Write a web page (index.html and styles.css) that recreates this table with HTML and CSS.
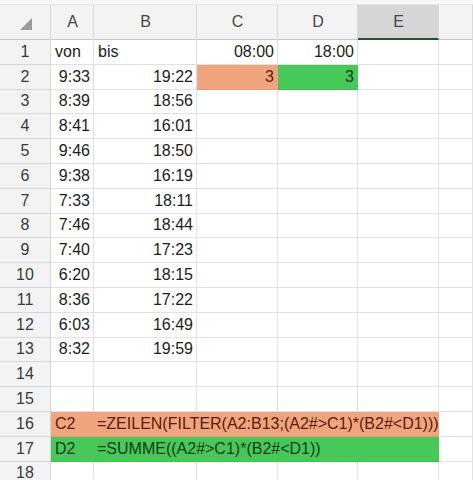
FILE: index.html
```html
<!DOCTYPE html>
<html lang="de">
<head>
<meta charset="utf-8">
<title>Tabelle</title>
<link rel="stylesheet" href="styles.css">
</head>
<body>
<div class="sheet">
  <div class="strip"></div>
  <div class="row head">
    <div class="c rh corner"><span class="tri"></span></div>
    <div class="c ch">A</div>
    <div class="c ch">B</div>
    <div class="c ch">C</div>
    <div class="c ch">D</div>
    <div class="c ch sel">E</div>
    <div class="c ch"></div>
  </div>
  <div class="row"><div class="c rh">1</div><div class="c">von</div><div class="c">bis</div><div class="c r">08:00</div><div class="c r">18:00</div><div class="c"></div><div class="c"></div></div>
  <div class="row"><div class="c rh">2</div><div class="c r">9:33</div><div class="c r">19:22</div><div class="c r or">3</div><div class="c r gr">3</div><div class="c"></div><div class="c"></div></div>
  <div class="row"><div class="c rh">3</div><div class="c r">8:39</div><div class="c r">18:56</div><div class="c"></div><div class="c"></div><div class="c"></div><div class="c"></div></div>
  <div class="row"><div class="c rh">4</div><div class="c r">8:41</div><div class="c r">16:01</div><div class="c"></div><div class="c"></div><div class="c"></div><div class="c"></div></div>
  <div class="row"><div class="c rh">5</div><div class="c r">9:46</div><div class="c r">18:50</div><div class="c"></div><div class="c"></div><div class="c"></div><div class="c"></div></div>
  <div class="row"><div class="c rh">6</div><div class="c r">9:38</div><div class="c r">16:19</div><div class="c"></div><div class="c"></div><div class="c"></div><div class="c"></div></div>
  <div class="row"><div class="c rh">7</div><div class="c r">7:33</div><div class="c r">18:11</div><div class="c"></div><div class="c"></div><div class="c"></div><div class="c"></div></div>
  <div class="row"><div class="c rh">8</div><div class="c r">7:46</div><div class="c r">18:44</div><div class="c"></div><div class="c"></div><div class="c"></div><div class="c"></div></div>
  <div class="row"><div class="c rh">9</div><div class="c r">7:40</div><div class="c r">17:23</div><div class="c"></div><div class="c"></div><div class="c"></div><div class="c"></div></div>
  <div class="row"><div class="c rh">10</div><div class="c r">6:20</div><div class="c r">18:15</div><div class="c"></div><div class="c"></div><div class="c"></div><div class="c"></div></div>
  <div class="row"><div class="c rh">11</div><div class="c r">8:36</div><div class="c r">17:22</div><div class="c"></div><div class="c"></div><div class="c"></div><div class="c"></div></div>
  <div class="row"><div class="c rh">12</div><div class="c r">6:03</div><div class="c r">16:49</div><div class="c"></div><div class="c"></div><div class="c"></div><div class="c"></div></div>
  <div class="row"><div class="c rh">13</div><div class="c r">8:32</div><div class="c r">19:59</div><div class="c"></div><div class="c"></div><div class="c"></div><div class="c"></div></div>
  <div class="row"><div class="c rh">14</div><div class="c"></div><div class="c"></div><div class="c"></div><div class="c"></div><div class="c"></div><div class="c"></div></div>
  <div class="row"><div class="c rh">15</div><div class="c"></div><div class="c"></div><div class="c"></div><div class="c"></div><div class="c"></div><div class="c"></div></div>
  <div class="row"><div class="c rh">16</div><div class="band or"><span class="ref">C2</span><span class="formula">=ZEILEN(FILTER(A2:B13;(A2#&gt;C1)*(B2#&lt;D1)))</span></div><div class="c"></div></div>
  <div class="row"><div class="c rh">17</div><div class="band gr"><span class="ref">D2</span><span class="formula">=SUMME((A2#&gt;C1)*(B2#&lt;D1))</span></div><div class="c"></div></div>
  <div class="row"><div class="c rh">18</div><div class="c"></div><div class="c"></div><div class="c"></div><div class="c"></div><div class="c"></div><div class="c"></div></div>
</div>
</body>
</html>
```
FILE: styles.css
```css
* { box-sizing: border-box; }
html, body { margin: 0; padding: 0; }
body {
  background: #ffffff;
  font-family: "Liberation Sans", Arial, sans-serif;
  font-size: 16px;
  color: #1c1c1c;
  overflow: hidden;
}
.sheet { width: 473px; }
.strip { height: 5px; background: #f6f6f6; border-bottom: 1px solid #e6e6e6; }
.row {
  display: grid;
  grid-template-columns: 51px 43px 103px 81px 80px 81px 1fr;
  height: 24.8px;
}
.row.head { height: 35px; }
.c {
  border-right: 1px solid #e1e1e1;
  border-bottom: 1px solid #e1e1e1;
  display: flex;
  align-items: center;
  padding: 0 3px 0 4px;
  white-space: nowrap;
  overflow: hidden;
}
.c.r { justify-content: flex-end; }
.rh {
  background: #f3f3f3;
  justify-content: center;
  color: #3a3a3a;
  border-right-color: #d6d6d6;
  border-bottom-color: #d6d6d6;
  padding: 0;
}
.ch {
  background: #f3f3f3;
  justify-content: center;
  color: #474747;
  border-right-color: #d9d9d9;
  border-bottom-color: #c8c8c8;
  font-size: 16px;
}
.ch.sel {
  background: #d6d6d6;
  border-bottom: 2px solid #24503a;
}
.corner { position: relative; border-bottom-color: #c8c8c8; }
.tri {
  position: absolute;
  left: 20px;
  top: 13px;
  width: 0;
  height: 0;
  border-left: 12px solid transparent;
  border-bottom: 12px solid #9c9c9c;
}
.or { background: #f1a57e; color: #5a1c08; }
.gr { background: #47c95a; color: #0c3914; }
.c.or, .c.gr { border-right-color: transparent; border-bottom-color: rgba(0,0,0,0.06); }
.band {
  grid-column: 2 / 7;
  display: flex;
  align-items: center;
  white-space: nowrap;
  border-bottom: 1px solid rgba(0,0,0,0.06);
}
.ref { width: 43px; padding-left: 4px; }
.formula { padding-left: 3px; }
```
